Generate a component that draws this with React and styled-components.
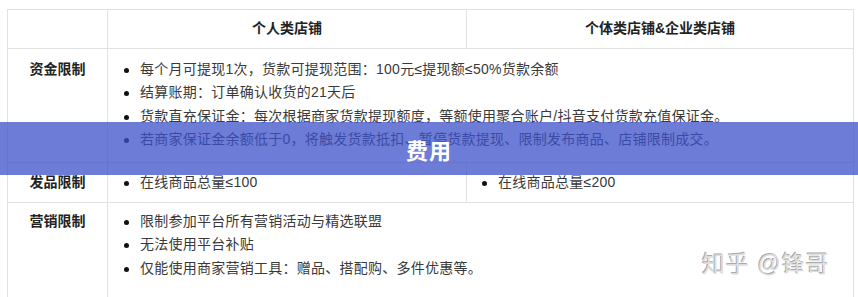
import React from 'react';
import styled, { createGlobalStyle } from 'styled-components';

const GlobalStyle = createGlobalStyle`
  html, body {
    margin: 0;
    padding: 0;
    background: #fff;
  }
  body {
    font-family: "Liberation Sans", "Noto Sans CJK SC", sans-serif;
    color: #333;
    overflow: hidden;
  }
`;

const Page = styled.div`
  position: relative;
  width: 858px;
  height: 297px;
  overflow: hidden;
  padding: 9px 5px 0 7px;
  box-sizing: border-box;
`;

const Table = styled.table`
  width: 846px;
  border-collapse: collapse;
  table-layout: fixed;
  font-size: 14px;
  line-height: 23.4px;
  color: #3a3a3a;

  td, th {
    border: 1px solid #e2e2e2;
  }
`;

const HeadCell = styled.th`
  height: 38px;
  padding: 0;
  font-weight: bold;
  text-align: center;
  vertical-align: middle;
  color: #222;
`;

const Label = styled.td`
  font-weight: bold;
  text-align: center;
  vertical-align: top;
  color: #222;
  padding: ${p => p.$pad || '9px 0 10px'};
`;

const Cell = styled.td`
  vertical-align: top;
  padding: ${p => p.$pad || '9px 0 10px'};
`;

const List = styled.ul`
  margin: 0;
  padding-left: ${p => p.$indent || 32}px;
  list-style: none;
`;

/* dot bullet drawn by hand so it doesn't stretch the line box */
const Item = styled.li`
  position: relative;
  white-space: nowrap;
  letter-spacing: 0.25px;

  &::before {
    content: "";
    position: absolute;
    left: -16px;
    top: 10px;
    width: 5px;
    height: 5px;
    border-radius: 50%;
    background: #111;
  }
`;

const Banner = styled.div`
  position: absolute;
  left: 0;
  right: 0;
  top: 122px;
  height: 53px;
  background: rgba(60, 80, 200, 0.75);
  display: flex;
  align-items: center;
  justify-content: center;
  color: #fff;
  font-size: 22px;
  font-weight: bold;
  letter-spacing: 1px;
`;

const Watermark = styled.div`
  position: absolute;
  left: 702px;
  top: 245px;
  font-size: 23px;
  color: #dedede;
  letter-spacing: 1px;
  text-shadow: -1px -1px 0 #aaa, 1px 1px 0 #fff;
`;

export default function App() {
  return (
    <Page>
      <GlobalStyle />
      <Table>
        <colgroup>
          <col style={{ width: 100 }} />
          <col style={{ width: 359 }} />
          <col style={{ width: 387 }} />
        </colgroup>
        <thead>
          <tr>
            <HeadCell />
            <HeadCell>个人类店铺</HeadCell>
            <HeadCell>个体类店铺&amp;企业类店铺</HeadCell>
          </tr>
        </thead>
        <tbody>
          <tr>
            <Label>资金限制</Label>
            <Cell colSpan={2}>
              <List>
                <Item>每个月可提现1次，货款可提现范围：100元≤提现额≤50%货款余额</Item>
                <Item>结算账期：订单确认收货的21天后</Item>
                <Item>货款直充保证金：每次根据商家货款提现额度，等额使用聚合账户/抖音支付货款充值保证金。</Item>
                <Item>若商家保证金余额低于0，将触发货款抵扣、暂停货款提现、限制发布商品、店铺限制成交。</Item>
              </List>
            </Cell>
          </tr>
          <tr>
            <Label $pad="8px 0">发品限制</Label>
            <Cell $pad="8px 0">
              <List>
                <Item>在线商品总量≤100</Item>
              </List>
            </Cell>
            <Cell $pad="8px 0">
              <List $indent={31}>
                <Item>在线商品总量≤200</Item>
              </List>
            </Cell>
          </tr>
          <tr>
            <Label $pad="7px 0 20px">营销限制</Label>
            <Cell colSpan={2} $pad="7px 0 20px">
              <List>
                <Item>限制参加平台所有营销活动与精选联盟</Item>
                <Item>无法使用平台补贴</Item>
                <Item>仅能使用商家营销工具：赠品、搭配购、多件优惠等。</Item>
              </List>
            </Cell>
          </tr>
        </tbody>
      </Table>
      <Banner>费用</Banner>
      <Watermark>知乎 @锋哥</Watermark>
    </Page>
  );
}
